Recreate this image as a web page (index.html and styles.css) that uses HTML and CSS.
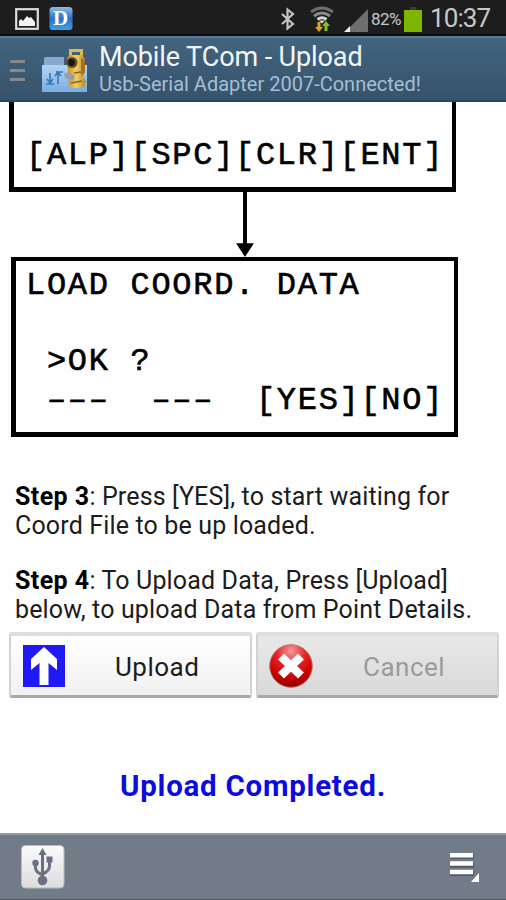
FILE: index.html
```html
<!DOCTYPE html>
<html lang="en">
<head>
  <meta charset="UTF-8" />
  <meta name="viewport" content="width=device-width, initial-scale=1.0"/>
  <title>Mobile TCom - Upload</title>
  <link rel="stylesheet" href="styles.css">
</head>
<body>

<div class="status-bar">
  <svg class="status-left" width="60" height="28" viewBox="0 0 60 28">
    <defs>
      <linearGradient id="dGrad" x1="0" y1="0" x2="0" y2="1">
        <stop offset="0" stop-color="#8fbde4"/>
        <stop offset="0.5" stop-color="#2673c4"/>
        <stop offset="1" stop-color="#3fa0ec"/>
      </linearGradient>
    </defs>
    <rect x="1.2" y="3.2" width="21.6" height="19.6" fill="#1c1c1c" stroke="#dedede" stroke-width="2.2"/>
    <path d="M4 20v-5l2-2 2 2 4-5 2 2 2-1 4 5v4z" fill="#f4f4f4"/>
    <rect x="34.500" y="1" width="23" height="23" rx="3.500" fill="url(#dGrad)"/>
    <text class="d-letter" x="38" y="19">D</text>
  </svg>
  <div class="status-right">
    <svg class="bluetooth" width="16" height="24" viewBox="0 0 16 24">
      <path d="M2 7l11 10-5.500 4.500v-19L13 7 2 17" fill="none" stroke="#c4c4c4" stroke-width="2.200"/>
    </svg>
    <svg class="wifi" width="26" height="28" viewBox="0 0 26 28">
      <g fill="none" stroke-width="3">
        <path d="M2 7Q13-1 24 7" stroke="#6d6d6d"/>
        <path d="M5 11Q13 5 21 11" stroke="#8a8a8a"/>
        <path d="M8.500 14.500Q13 11 17.500 14.500" stroke="#d5d5d5"/>
      </g>
      <path d="M10 15.500h6l-3 3z" fill="#ddd"/>
      <path d="M8.500 17h3v5h2.500l-4 5-4-5h2.500z" fill="#e8a51c"/>
      <path d="M15.500 26v-5H13l4-5 4 5h-2.500v5z" fill="#7cc41e"/>
    </svg>
    <svg class="signal" width="25" height="24" viewBox="0 0 25 24">
      <path d="M1 24L24 1v23z" fill="#6e6e6e"/>
      <path d="M0 24l6-6v6z" fill="#eee"/>
    </svg>
    <span class="percent">82%</span>
    <svg class="battery" width="18" height="25" viewBox="0 0 18 25">
      <path d="M6 0h6v3H6z" fill="#3c3c3c"/>
      <path d="M0 3h18v22H0z" fill="#7fb400"/>
    </svg>
    <span class="clock">10:37</span>
  </div>
</div>

<div class="header">
  <div class="drawer-icon"><i></i><i></i><i></i></div>
  <svg class="app-icon" width="48" height="46" viewBox="0 0 48 46">
    <defs>
      <linearGradient id="folder" x1="0" y1="0" x2="0" y2="1">
        <stop offset="0" stop-color="#b3d4f3"/>
        <stop offset="1" stop-color="#79ace0"/>
      </linearGradient>
      <linearGradient id="gold" x1="0" y1="0" x2="1" y2="0">
        <stop offset="0" stop-color="#c98f22"/>
        <stop offset="0.5" stop-color="#f0cf62"/>
        <stop offset="1" stop-color="#b98224"/>
      </linearGradient>
    </defs>
    <path d="M3 12q0-2 2-2h18v12H3z" fill="#86a9d0"/>
    <path d="M1 18h45v27H1z" fill="url(#folder)"/>
    <path d="M9 26v9M6 32l3 4 3-4M5 37h8M17 37V26M14 29l3-4 3 4M15 25h7" fill="none" stroke="#3478b8" stroke-width="1.600"/>
    <path d="M29.500 11V3.500h11V11" fill="none" stroke="#dcb84e" stroke-width="3"/>
    <path d="M26 11l3-3h12l3 4v13l-2 5 3 4-2 7H29l-2-6 3-4-3-5z" fill="url(#gold)"/>
    <path d="M40 11l4 2v12l-4 4z" fill="#a86f20"/>
    <circle cx="31" cy="15.500" r="5.500" fill="#6b4c22"/>
    <circle cx="30.500" cy="15.500" r="3.400" fill="#15151c"/>
    <path d="M23 27l5-2 6 4-2 5-8-3z" fill="#9b9da2"/>
    <path d="M30 36l11-2M33 26l7-1" stroke="#8a6222" stroke-width="1.500"/>
  </svg>
  <div class="titles">
    <h1>Mobile TCom - Upload</h1>
    <h2>Usb-Serial Adapter 2007-Connected!</h2>
  </div>
</div>

<div class="content">
  <div class="screen screen-top">
    <pre>[ALP][SPC][CLR][ENT]</pre>
  </div>
  <svg class="arrow" width="18" height="66" viewBox="0 0 18 66">
    <path d="M7 0h4v52h7l-9 14-9-14h7z" fill="#000"/>
  </svg>
  <div class="screen screen-load">
<pre>LOAD COORD. DATA

 &gt;OK ?</pre>
<pre class="keys"> –––  –––  [YES][NO]</pre>
  </div>

  <div class="steps">
    <p><b>Step 3</b>: Press [YES], to start waiting for<br>Coord File to be up loaded.</p>
    <p><b>Step 4</b>: To Upload Data, Press [Upload]<br>below, to upload Data from Point Details.</p>
  </div>

  <div class="buttons">
    <button>
      <svg width="42" height="42" viewBox="0 0 42 42">
        <path d="M0 0h42v42H0z" fill="#2119f5"/>
        <path d="M21 2l13 12v11l-8.500-7v22h-9V18L8 25V14z" fill="#fff"/>
      </svg>
      <span>Upload</span>
    </button>
    <button class="off" disabled>
      <svg width="44" height="44" viewBox="0 0 44 44">
        <defs>
          <radialGradient id="red" cx="0.5" cy="0.15" r="0.85">
            <stop offset="0" stop-color="#f59a9a"/>
            <stop offset="0.4" stop-color="#e32626"/>
            <stop offset="0.75" stop-color="#c90000"/>
            <stop offset="1" stop-color="#8f0000"/>
          </radialGradient>
        </defs>
        <circle cx="22" cy="22" r="21.300" fill="url(#red)" stroke="#c96a6a"/>
        <path d="M12 12.500l20 19M32 12.500l-20 19" stroke="#fff" stroke-width="8.500"/>
      </svg>
      <span>Cancel</span>
    </button>
  </div>

  <div class="done">Upload Completed.</div>
</div>

<div class="footer">
  <svg class="usb" width="44" height="44" viewBox="0 0 44 44">
    <defs>
      <linearGradient id="usbBg" x1="0" y1="0" x2="0" y2="1">
        <stop offset="0" stop-color="#fbfbfb"/>
        <stop offset="1" stop-color="#dcdcdc"/>
      </linearGradient>
    </defs>
    <rect x="0.500" y="0.500" width="42.500" height="42.500" rx="4" fill="url(#usbBg)" stroke="#b9bec4"/>
    <g fill="none" stroke="#6b7080" stroke-width="3">
      <path d="M21.500 34V8"/>
      <path d="M14.500 19v4q0 4 7 7"/>
      <path d="M28.500 15v6q0 5-7 8"/>
    </g>
    <path d="M17.500 10l4-7 4 7z" fill="#6b7080"/>
    <circle cx="14.500" cy="18" r="3.200" fill="#6b7080"/>
    <path d="M25.500 11.500h6v6h-6z" fill="#6b7080"/>
    <circle cx="21.500" cy="35.500" r="4.800" fill="#6b7080"/>
  </svg>
  <svg class="menu" width="32" height="32" viewBox="0 0 32 32">
    <path d="M1 3h24v5H1zM1 11.500h24v5H1zM1 20h24v5H1z" fill="#4f5864"/>
    <path d="M1 2h23v4.500H1zM1 10.300h23v4.500H1zM1 18.700h23v4.500H1zM30 22v9h-8z" fill="#fff"/>
  </svg>
</div>

</body>
</html>
```

FILE: styles.css
```css
body {
  margin: 0;
  height: 900px;
  display: flex;
  flex-direction: column;
  overflow: hidden;
  background-color: #fefefe;
  font-family: Roboto, sans-serif;
  color: #1c1c1c;
}

svg {
  display: block;
  flex: none;
}

.status-bar {
  height: 36px;
  flex: none;
  display: flex;
  justify-content: space-between;
  background-color: #1d1d1d;
  box-sizing: border-box;
  border-bottom: 2px solid #0b0e12;
}

.status-left {
  margin: 6px 0 0 15px;
}

.d-letter {
  font-family: "Liberation Serif", serif;
  font-weight: bold;
  font-size: 21px;
  fill: #fff;
}

.status-right {
  display: flex;
  align-items: flex-start;
  padding-right: 15px;
  color: #c8c8c8;
}

.bluetooth {
  margin: 7px 13px 0 0;
}

.wifi {
  margin: 5px 9px 0 0;
}

.signal {
  margin: 8px 2px 0 0;
}

.percent {
  width: 33px;
  font-size: 17px;
  line-height: 22px;
  margin-top: 8px;
  letter-spacing: -0.6px;
}

.battery {
  margin-top: 7px;
}

.clock {
  width: 61px;
  margin-left: 8px;
  font-size: 26px;
  line-height: 32px;
  margin-top: 2px;
  letter-spacing: -0.9px;
}

.header {
  height: 66px;
  flex: none;
  display: flex;
  box-sizing: border-box;
  background: linear-gradient(#42647f, #36536a);
  border-top: 2px solid #587994;
  border-bottom: 2px solid #264a62;
}

.drawer-icon {
  width: 15px;
  margin: 22px 16px 0 10px;
}

.drawer-icon i {
  display: block;
  height: 3px;
  margin-bottom: 6px;
  background-color: #85898f;
}

.app-icon {
  margin-top: 9px;
}

.titles {
  margin: 3px 0 0 10px;
  white-space: nowrap;
}

h1 {
  margin: 0;
  font-size: 27px;
  line-height: 32px;
  font-weight: normal;
  letter-spacing: -0.1px;
  color: #f3f5f7;
}

h2 {
  margin: 0;
  font-size: 20px;
  line-height: 22px;
  font-weight: normal;
  color: #a5bfd4;
}

.content {
  flex: 1;
}

.screen {
  border: 5px solid #000;
  box-sizing: border-box;
}

.screen-top {
  height: 90px;
  width: 447px;
  margin-left: 9px;
  border-top: none;
  border-right-width: 4px;
  padding: 35px 0 0 12px;
}

.screen-load {
  height: 180px;
  width: 447px;
  margin-left: 11px;
  border-top-width: 4px;
  border-right-width: 4px;
  padding: 6px 0 0 10px;
}

pre {
  margin: 0;
  font-family: "Liberation Mono", monospace;
  font-size: 32px;
  line-height: 38px;
  letter-spacing: 1.7px;
  color: #000;
  -webkit-text-stroke: 0.6px #000;
}

.keys {
  margin-top: 1px;
}

.arrow {
  margin-left: 236px;
  height: 65px;
}

.steps {
  padding: 45px 0 0 15px;
  font-size: 25px;
  line-height: 29px;
  letter-spacing: 0.15px;
  white-space: nowrap;
}

.steps p {
  margin: 0 0 27px;
}

.steps p:first-child {
  margin-bottom: 26px;
}

.steps b {
  color: #000;
  letter-spacing: 0.4px;
}

.buttons {
  display: flex;
  gap: 4px;
  margin: -19px 0 0 9px;
}

button {
  width: 243px;
  height: 66px;
  box-sizing: border-box;
  display: flex;
  align-items: center;
  padding: 0 0 0 12px;
  font-family: Roboto, sans-serif;
  font-size: 26px;
  letter-spacing: 0.5px;
  color: #1c1c1c;
  background: linear-gradient(#fff, #f1f1f1);
  border: 2px solid #d2d2d2;
  border-top: 4px solid #dedede;
  border-bottom: 3px solid #a9a9a9;
  border-radius: 3px;
}

button span {
  flex: 1;
  padding: 2px 0 0 50px;
  text-align: left;
}

.off {
  padding-left: 11px;
  color: #9a9a9a;
  background: linear-gradient(#e8e8e8, #d9d9d9);
}

.done {
  margin-top: 71px;
  text-align: center;
  font-size: 29.5px;
  line-height: 34px;
  letter-spacing: 0.75px;
  font-weight: bold;
  color: #0c0cdc;
}

.footer {
  height: 67px;
  flex: none;
  display: flex;
  justify-content: space-between;
  box-sizing: border-box;
  padding: 10px 25px 0 21px;
  background-color: #717c88;
  border-top: 2px solid #939ba4;
  border-bottom: 1px solid #4c5761;
}

.menu {
  margin-top: 6px;
}
```
